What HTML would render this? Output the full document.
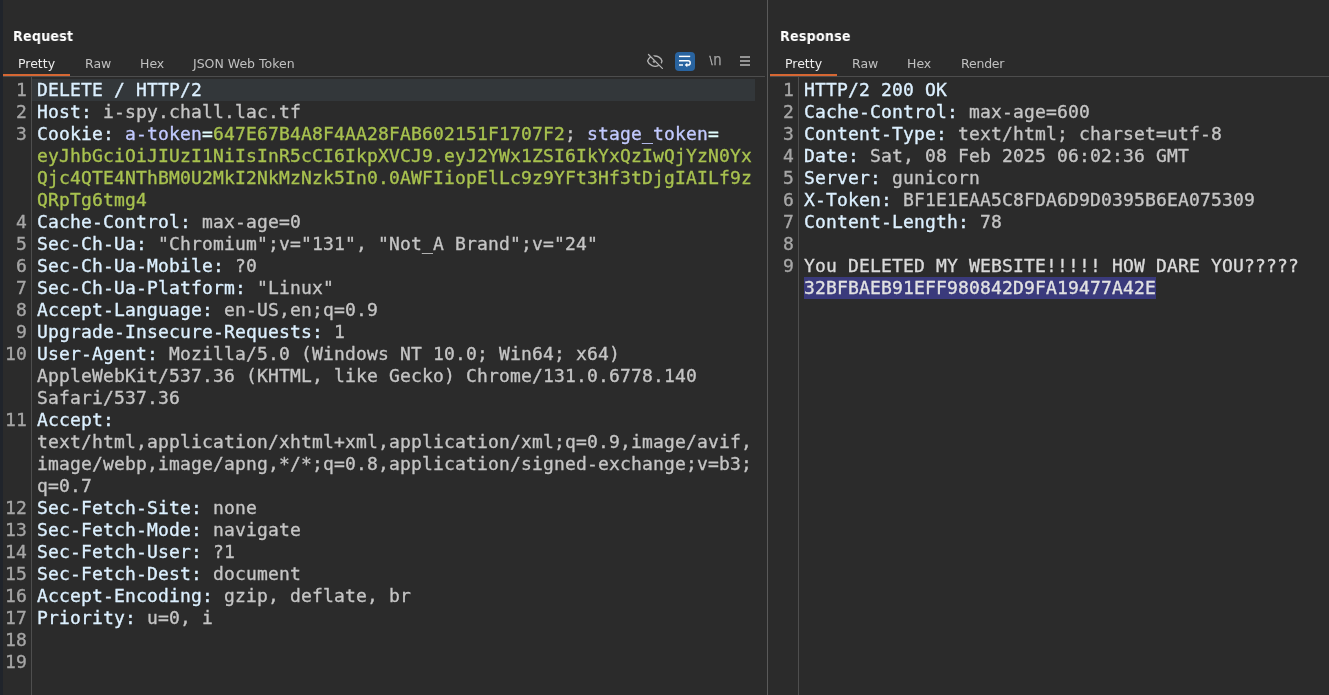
<!DOCTYPE html>
<html><head><meta charset="utf-8">
<style>
html,body{margin:0;padding:0;background:#2b2b2b;}
body{width:1329px;height:695px;position:relative;overflow:hidden;font-family:"DejaVu Sans","Liberation Sans",sans-serif;color:#bbb;}
.abs{position:absolute;}
.code,.gut,.title,.tab{will-change:transform;}
.code,.gut{-webkit-text-stroke:0.33px;}
.strip{left:0;top:0;width:3px;height:695px;background:#20242b;}
.title{font-weight:bold;font-size:14px;color:#fff;top:27px;line-height:18px;white-space:nowrap;transform:scaleX(0.91);transform-origin:0 0;letter-spacing:0.2px;}
.tab{font-size:12.5px;color:#c0c0c0;top:55px;line-height:18px;white-space:nowrap;}
.tab.sel{color:#ececec;}
.orange{background:#d66733;height:2px;top:74px;}
.hline{background:#4d4d4d;height:1px;top:76px;}
.vline{background:#4e4e4e;width:1px;}
.code{font-family:"DejaVu Sans Mono","Liberation Mono",monospace;font-size:18px;line-height:22px;letter-spacing:0.163px;white-space:pre;color:#c5c5c5;top:79px;}
.code div{height:22px;}
.gut{font-family:"DejaVu Sans Mono","Liberation Mono",monospace;font-size:18px;line-height:22px;letter-spacing:0.163px;white-space:pre;color:#a6a6a6;top:79px;text-align:right;}
.gut div{height:22px;}
.h{color:#dcf0ff;}
.n{color:#c2caff;}
.v{color:#a8c24f;}
.e{color:#e0fcfc;}
.hl{background:#33373a;left:32px;top:79px;width:723px;height:22px;}
.sel{}
.mark{background:#3a3a7c;color:#e2e2e2;display:inline-block;height:22px;}
.b{color:#dadada;}
</style></head><body>
<div class="abs strip"></div>

<!-- Request panel -->
<div class="abs title" style="left:13px;">Request</div>
<div class="abs tab sel" style="left:18px;">Pretty</div>
<div class="abs tab" style="left:85px;">Raw</div>
<div class="abs tab" style="left:140px;">Hex</div>
<div class="abs tab" style="left:193px;">JSON Web Token</div>
<div class="abs hline" style="left:3px;width:762px;"></div>
<div class="abs orange" style="left:3px;width:67px;"></div>
<div class="abs vline" style="left:31px;top:77px;height:618px;"></div>
<div class="abs hl"></div>
<div class="abs gut" style="left:0;width:27px;"><div>1</div><div>2</div><div>3</div><div> </div><div> </div><div> </div><div>4</div><div>5</div><div>6</div><div>7</div><div>8</div><div>9</div><div>10</div><div> </div><div> </div><div>11</div><div> </div><div> </div><div> </div><div>12</div><div>13</div><div>14</div><div>15</div><div>16</div><div>17</div><div>18</div><div>19</div></div>
<div class="abs code" style="left:37px;"><div><span class="h">DELETE / HTTP/2</span></div><div><span class="h">Host:</span> i-spy.chall.lac.tf</div><div><span class="h">Cookie:</span> <span class="n">a-token</span><span class="e">=</span><span class="v">647E67B4A8F4AA28FAB602151F1707F2</span>; <span class="n">stage_token</span><span class="e">=</span></div><div><span class="v">eyJhbGciOiJIUzI1NiIsInR5cCI6IkpXVCJ9.eyJ2YWx1ZSI6IkYxQzIwQjYzN0Yx</span></div><div><span class="v">Qjc4QTE4NThBM0U2MkI2NkMzNzk5In0.0AWFIiopElLc9z9YFt3Hf3tDjgIAILf9z</span></div><div><span class="v">QRpTg6tmg4</span></div><div><span class="h">Cache-Control:</span> max-age=0</div><div><span class="h">Sec-Ch-Ua:</span> "Chromium";v="131", "Not_A Brand";v="24"</div><div><span class="h">Sec-Ch-Ua-Mobile:</span> ?0</div><div><span class="h">Sec-Ch-Ua-Platform:</span> "Linux"</div><div><span class="h">Accept-Language:</span> en-US,en;q=0.9</div><div><span class="h">Upgrade-Insecure-Requests:</span> 1</div><div><span class="h">User-Agent:</span> Mozilla/5.0 (Windows NT 10.0; Win64; x64)</div><div>AppleWebKit/537.36 (KHTML, like Gecko) Chrome/131.0.6778.140</div><div>Safari/537.36</div><div><span class="h">Accept:</span></div><div>text/html,application/xhtml+xml,application/xml;q=0.9,image/avif,</div><div>image/webp,image/apng,*/*;q=0.8,application/signed-exchange;v=b3;</div><div>q=0.7</div><div><span class="h">Sec-Fetch-Site:</span> none</div><div><span class="h">Sec-Fetch-Mode:</span> navigate</div><div><span class="h">Sec-Fetch-User:</span> ?1</div><div><span class="h">Sec-Fetch-Dest:</span> document</div><div><span class="h">Accept-Encoding:</span> gzip, deflate, br</div><div><span class="h">Priority:</span> u=0, i</div></div>

<!-- Toolbar icons -->
<svg class="abs" style="left:640px;top:46px;will-change:transform;" width="125" height="30" viewBox="640 46 125 30">
  <!-- hidden-eye -->
  <g fill="none" stroke="#b4b4b4" stroke-width="1.3" stroke-linecap="round">
    <path d="M652.8 56.2 C657.6 55.2 661.2 58 662 61 C661.7 62.2 661.2 63.1 660.6 63.8"/>
    <path d="M650.4 57.1 C649 58.2 648 59.6 647.6 61 C649 65.6 654.5 67.4 658.2 65.6"/>
    <path d="M648.5 54.5 L662.4 68.4"/>
  </g>
  <circle cx="654" cy="61.6" r="1.3" fill="#a0a0a0"/>
  <path d="M650.4 53.8 L664 67.4" stroke="#2b2b2b" stroke-width="1.5" fill="none"/>
  <!-- wrap button -->
  <rect x="675" y="52" width="20" height="19" rx="4" ry="4" fill="#2964a0"/>
  <g fill="none" stroke="#ffffff" stroke-width="1.45">
    <path d="M679 56.4 H690.2"/>
    <path d="M679 60.8 H688.1 A2.1 2.1 0 0 1 688.1 65 H686.5"/>
    <path d="M679 65 H683"/>
  </g>
  <path d="M684.7 65 L687.3 62.8 V67.2 Z" fill="#ffffff"/>
  <!-- newline toggle -->
  <text x="709.5" y="64.2" font-family="'DejaVu Sans','Liberation Sans',sans-serif" font-size="10.6" fill="#bcbcbc" stroke="#bcbcbc" stroke-width="0.3" textLength="3.1" lengthAdjust="spacingAndGlyphs">\</text>
  <text x="713.3" y="64.7" font-family="'DejaVu Sans','Liberation Sans',sans-serif" font-size="15" fill="#a0a0a0" stroke="#a0a0a0" stroke-width="0.25" textLength="8.4" lengthAdjust="spacingAndGlyphs">n</text>
  <!-- hamburger -->
  <rect x="740" y="56" width="10" height="2" fill="#949494"/>
  <rect x="740" y="60" width="10" height="2" fill="#949494"/>
  <rect x="740" y="64" width="10" height="2" fill="#949494"/>
</svg>

<!-- Divider -->
<div class="abs vline" style="left:767px;top:0;height:695px;background:#5a5a5a;"></div>

<!-- Response panel -->
<div class="abs title" style="left:780px;">Response</div>
<div class="abs tab sel" style="left:785px;">Pretty</div>
<div class="abs tab" style="left:852px;">Raw</div>
<div class="abs tab" style="left:907px;">Hex</div>
<div class="abs tab" style="left:961px;letter-spacing:-0.2px;">Render</div>
<div class="abs hline" style="left:770px;width:559px;"></div>
<div class="abs orange" style="left:770px;width:67px;"></div>
<div class="abs vline" style="left:798px;top:77px;height:618px;"></div>
<div class="abs gut" style="left:767px;width:27px;"><div>1</div><div>2</div><div>3</div><div>4</div><div>5</div><div>6</div><div>7</div><div>8</div><div>9</div></div>
<div class="abs code" style="left:804px;"><div><span class="h">HTTP/2 200 OK</span></div><div><span class="h">Cache-Control:</span> max-age=600</div><div><span class="h">Content-Type:</span> text/html; charset=utf-8</div><div><span class="h">Date:</span> Sat, 08 Feb 2025 06:02:36 GMT</div><div><span class="h">Server:</span> gunicorn</div><div><span class="h">X-Token:</span> BF1E1EAA5C8FDA6D9D0395B6EA075309</div><div><span class="h">Content-Length:</span> 78</div><div> </div><div class="b">You DELETED MY WEBSITE!!!!! HOW DARE YOU?????</div><div><span class="mark">32BFBAEB91EFF980842D9FA19477A42E</span></div></div>
</body></html>
